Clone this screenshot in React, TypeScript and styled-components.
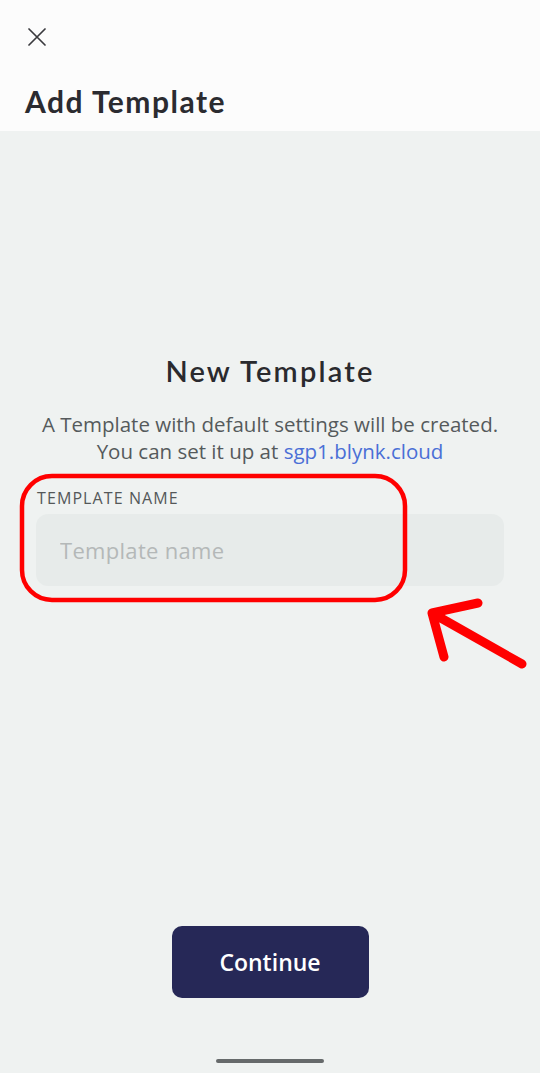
import React from "react";
import styled, { createGlobalStyle } from "styled-components";

const Global = createGlobalStyle`
  html, body { margin: 0; padding: 0; }
  body { font-family: "Open Sans", "Noto Sans", sans-serif; background: #eff2f1; }
  * { box-sizing: border-box; }
`;

const Page = styled.div`
  position: relative;
  width: 540px;
  height: 1073px;
  display: flex;
  flex-direction: column;
  background: #eff2f1;
  overflow: hidden;
`;

const Header = styled.header`
  height: 131px;
  background: #fcfcfc;
  padding: 28px 25px 0 25px;
  display: flex;
  flex-direction: column;
`;

const CloseButton = styled.button`
  width: 24px;
  height: 24px;
  padding: 0;
  margin-left: 3px;
  border: none;
  background: transparent;
  display: flex;
  align-items: flex-start;
  justify-content: flex-start;
`;

const Title = styled.h1`
  margin: 31px 0 0 0;
  font-family: "Lato", sans-serif;
  font-weight: 700;
  font-size: 30px;
  line-height: 36px;
  color: #2b2b30;
  letter-spacing: 1.5px;
`;

const Main = styled.main`
  flex: 1;
  display: flex;
  flex-direction: column;
  align-items: center;
  padding: 221px 36px 0 36px;
`;

const Heading = styled.h2`
  margin: 0;
  font-family: "Lato", sans-serif;
  font-weight: 600;
  font-size: 29px;
  line-height: 38px;
  color: #2a2a2e;
  letter-spacing: 2.2px;
`;

const Description = styled.p`
  margin: 21px -20px 0 -20px;
  text-align: center;
  font-family: "Open Sans", sans-serif;
  font-size: 20.5px;
  line-height: 27px;
  color: #555a5c;
`;

const Link = styled.a`
  color: #4a6fd6;
  text-decoration: none;
`;

const Field = styled.div`
  align-self: stretch;
  margin-top: 23px;
  display: flex;
  flex-direction: column;
`;

const Label = styled.label`
  font-family: "Open Sans", sans-serif;
  font-size: 16px;
  line-height: 20px;
  color: #545859;
  margin-left: 1px;
  letter-spacing: 1.1px;
`;

const Input = styled.input`
  margin-top: 6px;
  height: 72px;
  width: 100%;
  border: none;
  border-radius: 12px;
  background: #e7ebea;
  padding: 0 24px;
  font-family: "Open Sans", sans-serif;
  font-size: 22px;
  letter-spacing: 0.3px;
  color: #333;
  outline: none;
  &::placeholder { color: #b4b8b8; }
`;

const Spacer = styled.div`
  flex: 1;
`;

const ContinueButton = styled.button`
  width: 197px;
  height: 72px;
  border: none;
  border-radius: 10px;
  background: #262857;
  color: #ffffff;
  font-family: "Open Sans", sans-serif;
  font-weight: 600;
  font-size: 23px;
  margin-bottom: 61px;
`;

const HomeIndicator = styled.div`
  width: 108px;
  height: 4px;
  border-radius: 2px;
  background: #666a6b;
  margin-bottom: 10px;
`;

const Annotation = styled.svg`
  position: absolute;
  left: 0;
  top: 0;
  pointer-events: none;
`;

export default function App() {
  return (
    <>
      <Global />
      <Page>
        <Header>
          <CloseButton aria-label="Close">
            <svg width="18" height="18" viewBox="0 0 18 18">
              <path d="M1 1 L17 17 M17 1 L1 17" stroke="#3a3a3e" strokeWidth="1.7" strokeLinecap="round" />
            </svg>
          </CloseButton>
          <Title>Add Template</Title>
        </Header>
        <Main>
          <Heading>New Template</Heading>
          <Description>
            A Template with default settings will be created.
            <br />
            You can set it up at <Link href="#">sgp1.blynk.cloud</Link>
          </Description>
          <Field>
            <Label>TEMPLATE NAME</Label>
            <Input placeholder="Template name" />
          </Field>
          <Spacer />
          <ContinueButton>Continue</ContinueButton>
          <HomeIndicator />
        </Main>
        <Annotation width="540" height="1073" viewBox="0 0 540 1073">
          <rect x="22" y="476" width="383" height="124" rx="30" ry="30" fill="none" stroke="#ff0000" strokeWidth="4.5" />
          <path d="M522 664 L432 613 M432 613 L478 603 M432 613 L444 657" stroke="#ff0000" strokeWidth="9" strokeLinecap="round" strokeLinejoin="round" fill="none" />
        </Annotation>
      </Page>
    </>
  );
}
